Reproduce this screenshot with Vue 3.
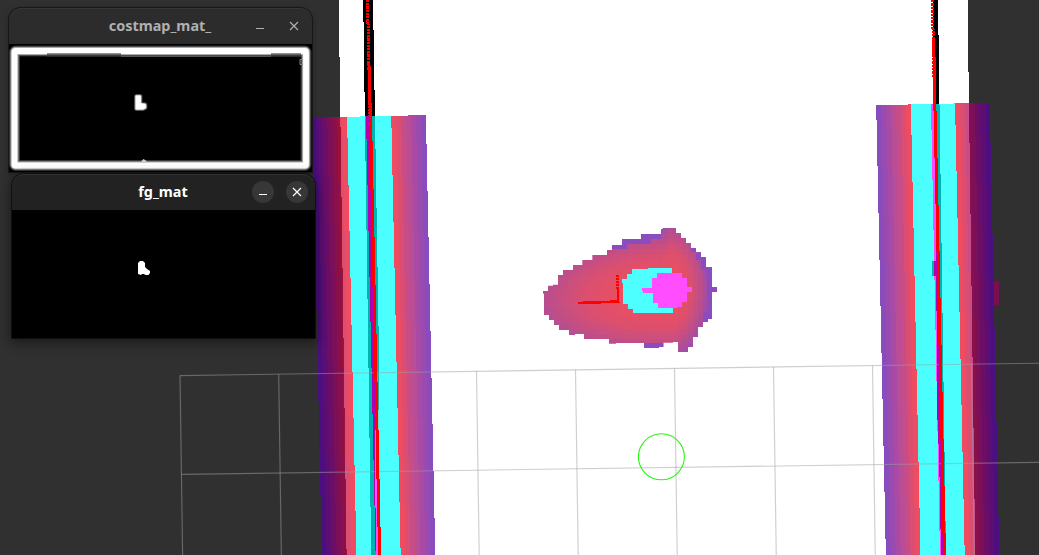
<script setup>
const ramp = ['#5a00a1', '#700090', '#86007e', '#9c036b', '#b00357', '#ce0337', '#e90120']
const SLOPE = 0.0215

// One inflated wall: seven cost cells, the lethal strip, seven mirrored cells.
function wall(x, y, tilt) {
  const cells = []
  let left = x
  const add = (w, fill) => {
    const t = y - tilt * (left - x)
    const t2 = y - tilt * (left + w - x)
    const d = (555 - y) * SLOPE
    cells.push({ fill, points: `${left},${t} ${left + w},${t2} ${left + w + d},555 ${left + d},555` })
    left += w
  }
  ramp.forEach(c => add(4.95, c))
  add(44.2, '#00ffff')
  ;[...ramp].reverse().forEach(c => add(4.95, c))
  return cells
}
const walls = [...wall(312.4, 117.5, 0.021), ...wall(876.2, 105.2, 0.022)]

function mix(t) {
  const stops = [[242, 78, 91], [220, 79, 110], [181, 78, 145], [140, 76, 190]]
  const s = Math.max(0, Math.min(2.999, t * 3))
  const i = Math.floor(s)
  const f = s - i
  return `rgb(${stops[i].map((v, k) => Math.round(v + (stops[i + 1][k] - v) * f)).join()})`
}
const blobCells = []
for (let r = 0; r < 26; r++) {
  for (let c = 0; c < 36; c++) {
    const x = 24 + c * 15, y = 27 + r * 15
    const cx = x + 7.5, cy = y + 7.5
    let t
    if (cx < 412) t = 0.7 * Math.pow(Math.hypot((412 - cx) / 385, (cy - 232 - (412 - cx) * 0.06) / 172), 1.6)
    else t = 0.92 * Math.pow(Math.hypot((cx - 412) / 128, (cy - 225) / 215), 1.7)
    blobCells.push({ x, y, fill: mix(t) })
  }
}

const verticals = [180, 278.7, 377.5, 476.5, 575.5, 674.5, 773.5, 872.5, 971.5].map(x => ({
  x, y: 375.6 - (x - 180) * 0.0146
}))
</script>

<template>
  <main class="viewport">
    <svg class="scene" width="1039" height="555" viewBox="0 0 1039 555">
      <defs>
        <clipPath id="blob">
          <path d="M39 236V228H54V212H69V209H84V180H99V165H129V150H157V135H187V120H231V105H246V90H276V72H333V57H393V42H398V39H438V54H453V69H468V84H483V99H498V112H513V126H528V156H546V216H561V231H546V312H534V321H519V336H504V366H489V396H474V411H444V381H429V383H400V396H387V399H342V384H258V386H237V372H162V357H135V360H117V345H87V330H72V315H57V300H42V236Z" />
        </clipPath>
      </defs>
      <g shape-rendering="crispEdges">
        <polygon points="338.7,0 967.5,0 975.3,555 346.6,555" fill="#fff" />
        <polygon points="363.2,0 373,0 379,355 379,410 374.5,411 376,555 371.2,555" fill="#000" />
        <polygon points="933,0 938,0 946,555 941,555 939.2,460 937.5,420 935.5,200 934,105" fill="#000" />
        <rect x="932" y="261" width="6" height="15" fill="#000" />
        <g opacity="0.7">
          <polygon v-for="(p, i) in walls" :key="i" :points="p.points" :fill="p.fill" />
          <polygon points="366,116 370,116 379.5,555 375.6,555" fill="#f0f" />
          <polygon points="931,104 934,104 943.5,555 940,555" fill="#f0f" />
          <rect x="994" y="281" width="5" height="24" fill="#980060" />
        </g>

        <g transform="translate(530 215) scale(.333333)">
          <g clip-path="url(#blob)">
            <rect v-for="(b, i) in blobCells" :key="i" :x="b.x" :y="b.y" width="15.2" height="15.2" :fill="b.fill" />
            <path d="M246 87H291V102H246ZM276 72H363V87H276ZM333 57H393V72H333ZM483 99H498V112H483ZM498 112H513V135H498ZM513 126H528V164H513ZM528 156H561V321H519V290H531V186H528ZM342 383H402V400H342Z" fill="#8c4cbe" />
          </g>
          <path d="M276 192H291V177H306V162H354V159H426V279H429V293H309V281H294V267H279V204H276Z" fill="#4dffff" />
          <path d="M366 189H381V174H456V189H471V216H486V231H471V261H456V275H441V279H384V264H369V234H339V228H336V219H366Z" fill="#ff4dff" />
        </g>
      </g>

      <g class="grid">
        <line x1="180" y1="375.6" x2="1039" y2="363.2" />
        <line x1="181.4" y1="474.4" x2="1039" y2="462.3" />
        <line v-for="v in verticals" :key="v.x" :x1="v.x" :y1="v.y" :x2="v.x + (555 - v.y) * 0.0146" y2="555" />
      </g>

      <g stroke="#f00" fill="none" shape-rendering="crispEdges">
        <path d="M367.5 0L370 116" stroke-width="3" stroke-dasharray="2.3 .9" />
        <path d="M368.9 62L370.9 135L379.6 555" stroke-width="3" />
        <path d="M932.4 0L934.3 90" stroke-width="3" stroke-dasharray="2.4 1" />
        <path d="M933.7 40L934.9 105L944.5 555" stroke-width="3" />
        <path d="M617.7 275V290" stroke-width="3" stroke-dasharray="2 1" />
        <path d="M618.3 289V302" stroke-width="2" />
        <path d="M578 303L607 302L619.5 301.3" stroke-width="2.6" />
      </g>
      <circle cx="661.4" cy="456.8" r="23" fill="none" stroke="#28f514" stroke-width="1.1" />
    </svg>

    <section class="window costmap">
      <header>
        <h1>costmap_mat_</h1>
        <svg class="controls" width="70" height="36" viewBox="0 0 70 36">
          <path d="M14 20.5H22M48 14L56 22M56 14L48 22" />
        </svg>
      </header>
      <svg class="image" width="303" height="127" viewBox="0 0 303 127">
        <g fill="none">
          <rect x="5.5" y="6" width="291.5" height="114.5" rx="1" stroke="#2c2c2c" stroke-width="11" />
          <rect x="5.5" y="6" width="291.5" height="114.5" rx="1" stroke="#555" stroke-width="9.4" />
          <rect x="5.5" y="6" width="291.5" height="114.5" rx="1" stroke="#aaa" stroke-width="7.8" />
          <rect x="5.5" y="6" width="291.5" height="114.5" rx="1" stroke="#fff" stroke-width="5.8" />
        </g>
        <path d="M38 10H112M262 10H292" stroke="#3c3c3c" stroke-width="3" />
        <path d="M38 9H112M262 9H292" stroke="#888" stroke-width="1" />
        <path d="M112 11.5H262" stroke="#555" stroke-width="1" />
        <path d="M132.500 118v-2l2-2 3 2v2Z" fill="#ccc" />
        <path d="M294 14.500h-3v5h3" fill="none" stroke="#888" />
        <g stroke-linejoin="round" fill="#fff">
          <path d="M127.500 51.500h3.500v7l5 1.500v2.500l-2 1h-6.500Z" stroke="#3a3a3a" stroke-width="5" />
          <path d="M127.500 51.500h3.500v7l5 1.500v2.500l-2 1h-6.500Z" stroke="#aaa" stroke-width="3.400" />
          <path d="M127.500 51.500h3.500v7l5 1.500v2.500l-2 1h-6.500Z" stroke="#fff" stroke-width="1.800" />
        </g>
      </svg>
    </section>

    <section class="window foreground">
      <header>
        <h1>fg_mat</h1>
        <svg class="controls" width="70" height="36" viewBox="0 0 70 36">
          <circle cx="18" cy="18" r="11" />
          <circle cx="52" cy="18" r="11" />
          <path d="M14 20.5H22M48 14L56 22M56 14L48 22" />
        </svg>
      </header>
      <svg class="image" width="303" height="127" viewBox="0 0 303 127">
        <path d="M126 52l2-2h3l2 2v4l2 2 3 2v2l-1.500 2h-3l-1.500-1h-2l-1 1-3-1Z" fill="#fff" />
      </svg>
    </section>
  </main>
</template>

<style>
body { margin: 0; overflow: hidden; background: #303030; }
</style>

<style scoped>
.viewport {
  position: relative;
  width: 1039px;
  height: 555px;
  overflow: hidden;
  background: #303030;
  font-family: "Noto Sans", "Open Sans", sans-serif;
}
.scene { display: block; }
.grid line { stroke: rgba(160, 160, 160, 0.5); stroke-width: 1.15; }
.window {
  position: absolute;
  width: 303px;
  display: flex;
  flex-direction: column;
  border-radius: 12px 12px 0 0;
  background: #000;
}
.costmap {
  left: 9px;
  top: 8px;
  color: #b0b0b0;
  box-shadow: 0 0 0 1px #171717, 0 2px 6px rgba(0, 0, 0, 0.35);
}
.foreground {
  left: 12px;
  top: 174px;
  color: #fff;
  box-shadow: 0 0 0 1px #101010, 0 3px 12px 2px rgba(0, 0, 0, 0.45);
}
header {
  position: relative;
  display: flex;
  justify-content: center;
  align-items: center;
  height: 36px;
  border-radius: 12px 12px 0 0;
  background: #2c2c2c;
  box-shadow: inset 0 1px #353535;
}
.foreground header { background: #222; box-shadow: inset 0 1px #303030; }
h1 { margin: 0 1px 0 0; font-size: 14.4px; line-height: 20px; font-weight: 700; }
.controls { position: absolute; right: 0; top: 0; fill: none; stroke: currentColor; stroke-width: 1.2; }
.controls circle { fill: #373737; stroke: none; }
.image { display: block; margin-top: 1px; }
</style>
